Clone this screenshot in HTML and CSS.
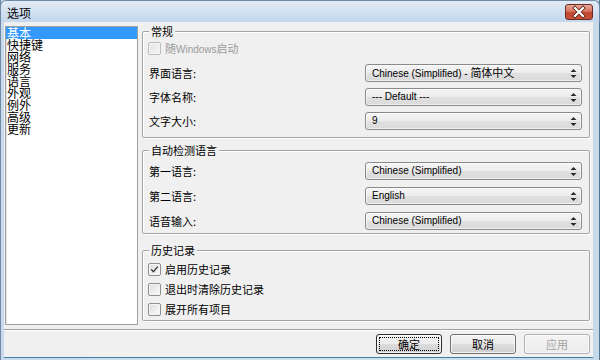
FILE: index.html
```html
<!DOCTYPE html>
<html lang="zh-CN">
<head>
<meta charset="utf-8">
<title>选项</title>
<link rel="stylesheet" href="styles.css">
</head>
<body>
<div class="window">
  <div class="titlebar">
    <span class="title">选项</span>
    <div class="close">
      <svg width="28" height="16" viewBox="0 0 28 16">
        <path d="M10 4 L18 12 M18 4 L10 12" stroke="#5a1e16" stroke-width="3.8" stroke-linecap="square" fill="none"/>
        <path d="M10 4 L18 12 M18 4 L10 12" stroke="#ffffff" stroke-width="2.2" stroke-linecap="square" fill="none"/>
      </svg>
    </div>
  </div>
  <div class="client">
    <div class="main">
      <ul class="list">
        <li class="sel"><span>基本</span></li>
        <li><span>快捷键</span></li>
        <li><span>网络</span></li>
        <li><span>服务</span></li>
        <li><span>语言</span></li>
        <li><span>外观</span></li>
        <li><span>例外</span></li>
        <li><span>高级</span></li>
        <li><span>更新</span></li>
      </ul>
      <div class="panel">
        <div class="group g1">
          <span class="legend">常规</span>
          <label class="check disabled"><span class="cb"></span><span>随<span class="lat">Windows</span>启动</span></label>
          <div class="form">
            <span class="lbl">界面语言:</span>
            <div class="select"><span><span class="lat">Chinese (Simplified) - </span>简体中文</span><svg class="arr" width="7" height="9" viewBox="0 0 7 9"><path d="M3.5 0 L6.5 3 L0.5 3 Z M0.5 6 L6.5 6 L3.5 9 Z" fill="#2b2b2b"/></svg></div>
            <span class="lbl">字体名称:</span>
            <div class="select"><span class="lat">--- Default ---</span><svg class="arr" width="7" height="9" viewBox="0 0 7 9"><path d="M3.5 0 L6.5 3 L0.5 3 Z M0.5 6 L6.5 6 L3.5 9 Z" fill="#2b2b2b"/></svg></div>
            <span class="lbl">文字大小:</span>
            <div class="select"><span class="lat">9</span><svg class="arr" width="7" height="9" viewBox="0 0 7 9"><path d="M3.5 0 L6.5 3 L0.5 3 Z M0.5 6 L6.5 6 L3.5 9 Z" fill="#2b2b2b"/></svg></div>
          </div>
        </div>
        <div class="group g2">
          <span class="legend">自动检测语言</span>
          <div class="form loose">
            <span class="lbl">第一语言:</span>
            <div class="select"><span class="lat">Chinese (Simplified)</span><svg class="arr" width="7" height="9" viewBox="0 0 7 9"><path d="M3.5 0 L6.5 3 L0.5 3 Z M0.5 6 L6.5 6 L3.5 9 Z" fill="#2b2b2b"/></svg></div>
            <span class="lbl">第二语言:</span>
            <div class="select"><span class="lat">English</span><svg class="arr" width="7" height="9" viewBox="0 0 7 9"><path d="M3.5 0 L6.5 3 L0.5 3 Z M0.5 6 L6.5 6 L3.5 9 Z" fill="#2b2b2b"/></svg></div>
            <span class="lbl">语音输入:</span>
            <div class="select"><span class="lat">Chinese (Simplified)</span><svg class="arr" width="7" height="9" viewBox="0 0 7 9"><path d="M3.5 0 L6.5 3 L0.5 3 Z M0.5 6 L6.5 6 L3.5 9 Z" fill="#2b2b2b"/></svg></div>
          </div>
        </div>
        <div class="group g3">
          <span class="legend">历史记录</span>
          <label class="check"><span class="cb checked"><svg width="11" height="11" viewBox="0 0 11 11"><path d="M2.2 5.4 L4.4 7.8 L8.8 2.6" stroke="#3a3a3a" stroke-width="1.4" fill="none"/></svg></span><span>启用历史记录</span></label>
          <label class="check"><span class="cb"></span><span>退出时清除历史记录</span></label>
          <label class="check"><span class="cb"></span><span>展开所有项目</span></label>
        </div>
      </div>
    </div>
    <div class="sep"></div>
    <div class="buttons">
      <button class="btn default"><span class="focus">确定</span></button>
      <button class="btn">取消</button>
      <button class="btn disabled">应用</button>
    </div>
  </div>
</div>
</body>
</html>
```
FILE: styles.css
```css
* { box-sizing: border-box; }
html, body { margin: 0; padding: 0; }
body {
  width: 600px;
  height: 360px;
  overflow: hidden;
  font-family: "Noto Sans CJK SC", "Noto Sans", sans-serif;
  font-size: 11px;
  color: #000;
  background: #ffffff;
}
.lat {
  font-family: "Liberation Sans", "Noto Sans CJK SC", sans-serif;
  font-size: 10px;
}
.window {
  width: 600px;
  height: 360px;
  display: flex;
  flex-direction: column;
  background: linear-gradient(90deg, #c9daed, #d3e2f2 50%, #c6daec);
  box-shadow: inset 1px 0 0 #6f8aa6, inset -1px 0 0 #55768f;
}
.titlebar {
  height: 22px;
  flex: none;
  display: flex;
  align-items: flex-start;
  justify-content: space-between;
  padding: 0 6px 0 6px;
  background: linear-gradient(#e2ebf6 0%, #d6e3f2 40%, #c4d7ed 100%);
  border: 1px solid #6f8aa6;
  border-bottom: none;
  border-radius: 6px 6px 0 0;
}
.title {
  font-size: 12px;
  line-height: 14px;
  margin-top: 5px;
  color: #000;
}
.close {
  width: 28px;
  height: 16px;
  margin-top: 3px;
  border: 1px solid #6b2b22;
  border-radius: 3px;
  background: linear-gradient(#e8a898 0%, #d77462 45%, #c2452f 55%, #c8523a 100%);
  display: flex;
  align-items: center;
  justify-content: center;
  overflow: hidden;
}
.close svg { display: block; margin: -1px; }
.client {
  flex: 1;
  margin: 0 7px 3px 4px;
  background: #f0f0f0;
  display: flex;
  flex-direction: column;
  padding: 4px 3px 3px 1px;
  box-shadow: 0 1px 0 #3f7f9c;
}
.main {
  display: flex;
  gap: 4px;
  height: 299px;
  flex: none;
}
.list {
  width: 133px;
  height: 299px;
  flex: none;
  margin: 0;
  padding: 0;
  list-style: none;
  background: #fff;
  border: 1px solid #a0a0a0;
  box-shadow: inset 1px 1px 0 #e3e3e3;
  font-size: 12px;
  line-height: 12px;
}
.list li {
  height: 12px;
  padding-left: 1px;
  white-space: nowrap;
}
.list li span {
  display: inline-block;
  height: 12px;
  line-height: 12px;
  vertical-align: top;
}
.list li.sel {
  background: #3399ff;
  color: #fff;
}
.panel {
  flex: 1;
  display: flex;
  flex-direction: column;
  padding-top: 5px;
}
.group {
  position: relative;
  flex: none;
  border: 1px solid #a4a4a4;
  border-radius: 2px;
  box-shadow: inset 1px 1px 0 #ffffff, 1px 1px 0 #ffffff;
}
.legend {
  position: absolute;
  top: -9px;
  left: 6px;
  padding: 0 2px;
  line-height: 16px;
  background: #f0f0f0;
  white-space: nowrap;
}
.g1 { height: 107px; padding: 10px 7px 0 5px; }
.g2 { height: 84px; margin-top: 12px; padding: 11px 7px 0 5px; }
.g3 { height: 71px; margin-top: 16px; padding: 12px 7px 0 5px; display: flex; flex-direction: column; gap: 7px; }
.check {
  display: flex;
  align-items: center;
  gap: 4px;
  height: 13px;
  line-height: 13px;
  white-space: nowrap;
}
.g1 .check { margin-bottom: 9px; }
.check.disabled { color: #9a9a9a; }
.cb {
  width: 13px;
  height: 13px;
  flex: none;
  border: 1px solid #8f8f8f;
  border-radius: 2px;
  background: linear-gradient(135deg, #d9dadc 0%, #eeeeef 55%, #fbfbfb 100%);
  box-shadow: inset 0 0 0 1px #f6f6f6;
  display: flex;
  align-items: center;
  justify-content: center;
}
.cb svg { display: block; }
.check.disabled .cb {
  border-color: #bcbcbc;
  background: linear-gradient(135deg, #e4e4e4, #f4f4f4);
}
.form {
  display: grid;
  grid-template-columns: 1fr 217px;
  grid-auto-rows: 18px;
  row-gap: 6px;
  align-items: center;
}
.form.loose { row-gap: 7px; }
.lbl {
  padding-left: 1px;
  white-space: nowrap;
  line-height: 14px;
}
.select {
  height: 18px;
  border: 1px solid #8a8a8a;
  border-radius: 3px;
  background: linear-gradient(#f5f5f5 0%, #ececec 50%, #e0e0e0 51%, #dadada 100%);
  box-shadow: inset 0 0 0 1px rgba(255,255,255,0.6);
  display: flex;
  align-items: center;
  justify-content: space-between;
  padding: 0 4px 0 6px;
  white-space: nowrap;
  line-height: 14px;
}
.arr { display: block; flex: none; }
.sep {
  height: 2px;
  flex: none;
  margin: 4px -3px 0 -1px;
  border-top: 1px solid #a0a0a0;
  border-bottom: 1px solid #ffffff;
}
.buttons {
  display: flex;
  justify-content: flex-end;
  gap: 8px;
  margin-top: 3px;
}
.btn {
  width: 66px;
  height: 20px;
  padding: 0;
  margin: 0;
  font-family: inherit;
  font-size: 11px;
  line-height: 14px;
  color: #000;
  border: 1px solid #707070;
  border-radius: 3px;
  background: linear-gradient(#f3f3f3 0%, #ebebeb 50%, #dddddd 51%, #cfcfcf 100%);
  box-shadow: inset 0 0 0 1px rgba(255,255,255,0.7);
  display: flex;
  align-items: center;
  justify-content: center;
}
.btn.default {
  border-color: #2f2f2f;
  padding: 2px;
}
.btn .focus {
  flex: 1;
  align-self: stretch;
  display: flex;
  align-items: center;
  justify-content: center;
  outline: 1px dotted #000;
  outline-offset: -1px;
}
.btn.disabled {
  color: #a3a3a3;
  border-color: #adb2b5;
  background: linear-gradient(#f4f4f4, #ececec);
}
```
